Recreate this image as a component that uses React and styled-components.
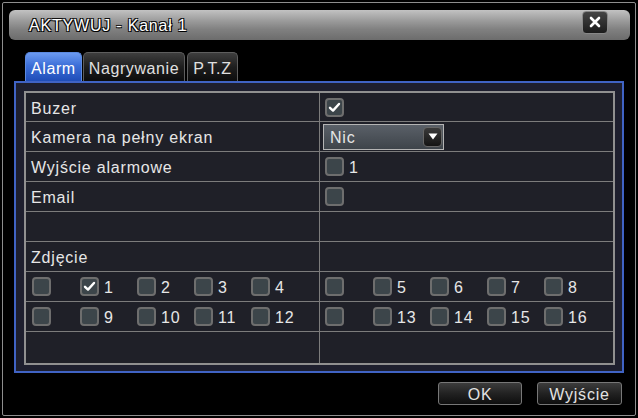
import React from 'react';
import styled, { createGlobalStyle } from 'styled-components';

const Global = createGlobalStyle`
  html, body {
    margin: 0;
    padding: 0;
    background: #000;
  }
  * {
    box-sizing: border-box;
  }
`;

const Screen = styled.div`
  width: 638px;
  height: 418px;
  background: #000;
  padding: 2px;
  font-family: "Liberation Sans", Arial, sans-serif;
  color: #e6e6e6;
  font-size: 16px;
  letter-spacing: 0.8px;
`;

const Frame = styled.div`
  height: 100%;
  border: 1px solid #8e8e8e;
  border-radius: 2px;
  display: flex;
  flex-direction: column;
`;

const TitleBar = styled.div`
  height: 30px;
  margin: 7px 5px 0 6px;
  border-radius: 6px;
  background: linear-gradient(#c2c2c2 0%, #9c9c9c 35%, #808080 65%, #6c6c6c 100%);
  display: flex;
  align-items: center;
  justify-content: space-between;
  padding: 0 22px 0 20px;
`;

const Title = styled.span`
  color: #fff;
  padding-top: 2px;
  text-shadow: 1px 1px 0 #000, -1px -1px 0 #111, 1px -1px 0 #111, -1px 1px 0 #111;
`;

const CloseButton = styled.div`
  width: 26px;
  height: 23px;
  margin-top: -6px;
  border-radius: 4px;
  border: 1px solid #888;
  background: linear-gradient(#444, #1c1c1c);
  display: flex;
  align-items: center;
  justify-content: center;
`;

const Tabs = styled.div`
  display: flex;
  gap: 1px;
  margin: 12px 0 0 22px;
  height: 29px;
`;

const Tab = styled.div`
  height: 29px;
  padding: 3px 5px 0;
  display: flex;
  align-items: center;
  border-radius: 5px 5px 0 0;
  border: 1px solid ${p => (p.$active ? '#5c8ae0' : '#5e5e5e')};
  border-bottom: none;
  background: ${p =>
    p.$active
      ? 'linear-gradient(#6b9af0 0%, #3c6fd8 45%, #1f4db8 100%)'
      : 'linear-gradient(#3e3e3e 0%, #1e1e1e 50%, #0c0c0c 100%)'};
  color: ${p => (p.$active ? '#fff' : '#e0e0e0')};
  letter-spacing: 0.6px;
  margin-left: ${p => p.$gap || 0}px;
`;

const Panel = styled.div`
  height: 292px;
  margin: 0 11px;
  border: 2px solid #4063c4;
  background: #1e1f2e;
  padding: 8px 7px 6px 8px;
`;

const Table = styled.div`
  height: 100%;
  border: 2px solid #909090;
  background: #1f2028;
  display: grid;
  grid-template-rows: 29px repeat(7, 30px) 1fr;
`;

const Row = styled.div`
  display: grid;
  grid-template-columns: 294px 1fr;
  border-bottom: ${p => (p.$last ? 'none' : '1px solid #7c7c7c')};
`;

const Cell = styled.div`
  display: flex;
  align-items: center;
  padding-left: ${p => p.$pad ?? 5}px;
  border-right: ${p => (p.$left ? '1px solid #7c7c7c' : 'none')};
`;

const Label = styled.span`
  color: #e6e6e6;
  padding-top: ${p => p.$drop ?? 3}px;
`;

const Box = styled.div`
  width: 19px;
  height: 19px;
  border: 2px solid #6e6e6e;
  border-radius: 4px;
  background: #3c454a;
  display: flex;
  align-items: center;
  justify-content: center;
  flex-shrink: 0;
`;

const CheckItem = styled.div`
  display: flex;
  align-items: center;
  gap: 5px;
`;

const PhotoGrid = styled.div`
  display: grid;
  grid-template-columns: 48px repeat(4, 57px);
  align-items: center;
`;

const Select = styled.div`
  width: 121px;
  height: 26px;
  border: 1px solid #b4b4b4;
  background: linear-gradient(#5a6068, #3e444a);
  display: flex;
  align-items: center;
  justify-content: space-between;
  padding: 0 1px 0 6px;
  color: #fff;
  margin-left: -2px;
`;

const Arrow = styled.div`
  width: 19px;
  height: 20px;
  border-radius: 4px;
  border: 1px solid #666;
  background: linear-gradient(#3a3a3a, #141414);
  display: flex;
  align-items: center;
  justify-content: center;
`;

const Footer = styled.div`
  display: flex;
  justify-content: flex-end;
  gap: 15px;
  margin: 9px 13px 0 0;
`;

const Button = styled.div`
  width: ${p => p.$w}px;
  height: 23px;
  border: 1px solid #777;
  border-radius: 3px;
  background: linear-gradient(#3c3c3c 0%, #222 50%, #0e0e0e 100%);
  display: flex;
  align-items: center;
  justify-content: center;
  padding-top: 2px;
  color: #e2e2e2;
`;

const Check = () => (
  <svg width="13" height="13" viewBox="0 0 13 13">
    <path d="M2 6.8 L5 9.6 L11 3" fill="none" stroke="#fff" strokeWidth="2.4" strokeLinecap="round" strokeLinejoin="round" />
  </svg>
);

function Checkbox({ checked, label }) {
  return (
    <CheckItem>
      <Box>{checked && <Check />}</Box>
      {label && <Label $drop={2}>{label}</Label>}
    </CheckItem>
  );
}

const leftPhotos = [null, '1', '2', '3', '4'];
const leftPhotos2 = [null, '9', '10', '11', '12'];
const rightPhotos = [null, '5', '6', '7', '8'];
const rightPhotos2 = [null, '13', '14', '15', '16'];

function Photos({ items, checked = [] }) {
  return (
    <PhotoGrid>
      {items.map((n, i) => (
        <Checkbox key={i} label={n} checked={checked.includes(n)} />
      ))}
    </PhotoGrid>
  );
}

export default function App() {
  return (
    <>
      <Global />
      <Screen>
        <Frame>
          <TitleBar>
            <Title>AKTYWUJ - Kanał 1</Title>
            <CloseButton>
              <svg width="12" height="12" viewBox="0 0 12 12">
                <path d="M2 2 L10 10 M10 2 L2 10" stroke="#fff" strokeWidth="2.6" strokeLinecap="round" />
              </svg>
            </CloseButton>
          </TitleBar>

          <Tabs>
            <Tab $active>Alarm</Tab>
            <Tab>Nagrywanie</Tab>
            <Tab $gap={1}>P.T.Z</Tab>
          </Tabs>

          <Panel>
            <Table>
              <Row>
                <Cell $left><Label>Buzer</Label></Cell>
                <Cell><Checkbox checked /></Cell>
              </Row>
              <Row>
                <Cell $left><Label>Kamera na pełny ekran</Label></Cell>
                <Cell>
                  <Select>
                    <Label $drop={2}>Nic</Label>
                    <Arrow>
                      <svg width="10" height="7" viewBox="0 0 10 7">
                        <path d="M0.5 0.5 L9.5 0.5 L5 6.5 Z" fill="#fff" />
                      </svg>
                    </Arrow>
                  </Select>
                </Cell>
              </Row>
              <Row>
                <Cell $left><Label>Wyjście alarmowe</Label></Cell>
                <Cell><Checkbox label="1" /></Cell>
              </Row>
              <Row>
                <Cell $left><Label>Email</Label></Cell>
                <Cell><Checkbox /></Cell>
              </Row>
              <Row>
                <Cell $left />
                <Cell />
              </Row>
              <Row>
                <Cell $left><Label>Zdjęcie</Label></Cell>
                <Cell />
              </Row>
              <Row>
                <Cell $left $pad={6}><Photos items={leftPhotos} checked={['1']} /></Cell>
                <Cell><Photos items={rightPhotos} /></Cell>
              </Row>
              <Row>
                <Cell $left $pad={6}><Photos items={leftPhotos2} /></Cell>
                <Cell><Photos items={rightPhotos2} /></Cell>
              </Row>
              <Row $last>
                <Cell $left />
                <Cell />
              </Row>
            </Table>
          </Panel>

          <Footer>
            <Button $w={84}>OK</Button>
            <Button $w={85}>Wyjście</Button>
          </Footer>
        </Frame>
      </Screen>
    </>
  );
}
